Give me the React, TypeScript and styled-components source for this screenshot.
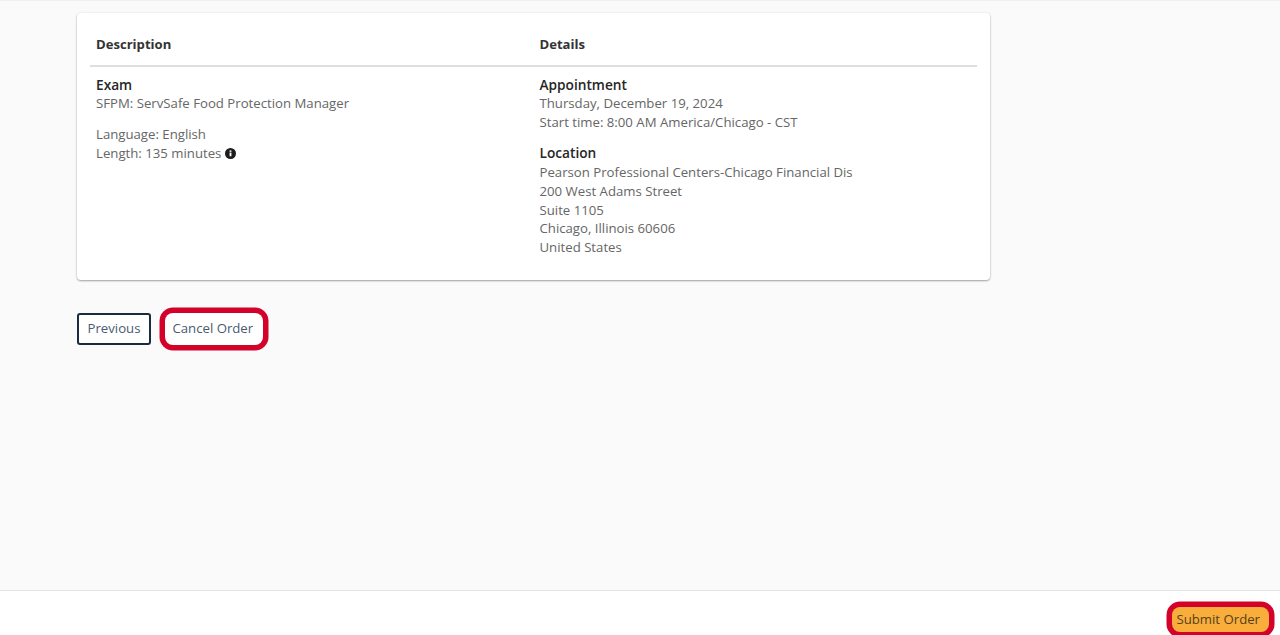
import React from "react";
import styled, { createGlobalStyle } from "styled-components";

const Global = createGlobalStyle`
  html, body { margin: 0; padding: 0; height: 100%; overflow: hidden; }
  body { font-family: "Open Sans", "Noto Sans", sans-serif; background: #fafafa; }
`;

const Page = styled.div`
  height: 635px;
  display: flex;
  flex-direction: column;
  border-top: 1px solid #f0f0f0;
  box-sizing: border-box;
`;

const Main = styled.main`
  flex: 1;
  padding: 12px 290px 0 77px;
`;

const Card = styled.section`
  height: 267px;
  box-sizing: border-box;
  background: #fff;
  border-radius: 4px;
  box-shadow: 0 1px 2px rgba(0, 0, 0, 0.35), 0 0 3px rgba(0, 0, 0, 0.06);
  padding: 0 13px;
`;

const Columns = styled.div`
  display: grid;
  grid-template-columns: 443.5px 1fr;
  padding-left: 6px;
`;

const HeadRow = styled(Columns)`
  height: 42px;
  align-items: center;
  padding-top: 10px;
  box-sizing: content-box;
  border-bottom: 2px solid #dedede;
`;

const HeadCell = styled.div`
  font-size: 13.1px;
  font-weight: 700;
  color: #333;
`;

const BodyRow = styled(Columns)`
  padding-top: 9px;
`;

const Block = styled.div`
  font-size: 13.2px;
  line-height: 18.7px;
  color: #666;
  margin-bottom: 12.5px;
`;

const Label = styled.div<{ $after?: number }>`
  font-size: 13.7px;
  font-weight: 600;
  color: #262626;
  margin-bottom: ${(p) => p.$after ?? -0.5}px;
`;

const InfoIcon = styled.svg`
  width: 11px;
  height: 11px;
  margin-left: 4px;
  vertical-align: -1px;
`;

const Actions = styled.div`
  display: flex;
  gap: 14.5px;
  margin-top: 33px;
`;

const Button = styled.button<{ $ring?: boolean; $primary?: boolean }>`
  font-family: inherit;
  font-size: 13.2px;
  color: ${(p) => (p.$primary ? "#54401c" : "#4a5a70")};
  height: ${(p) => (p.$primary ? "25px" : "32px")};
  padding: ${(p) =>
    p.$primary ? "0 9px 2px 4px" : p.$ring ? "0 10px 2px 7px" : "0 8.5px 2px"};
  border-radius: ${(p) => (p.$ring ? "8px" : "3px")};
  background: ${(p) => (p.$primary ? "#f9ae3b" : "#fff")};
  border: ${(p) => (p.$ring ? "none" : "2px solid #1a2b40")};
  box-shadow: ${(p) => (p.$ring ? "0 0 0 5.5px #d3022a" : "none")};
  white-space: nowrap;
`;

const Footer = styled.footer`
  height: 45px;
  box-sizing: border-box;
  background: #fff;
  border-top: 1px solid #e3e3e3;
  display: flex;
  justify-content: flex-end;
  align-items: flex-start;
  padding: 16px 11px 0 0;
`;

export default function App() {
  return (
    <>
      <Global />
      <Page>
        <Main>
          <Card>
            <HeadRow>
              <HeadCell>Description</HeadCell>
              <HeadCell>Details</HeadCell>
            </HeadRow>
            <BodyRow>
              <div>
                <Block>
                  <Label>Exam</Label>
                  SFPM: ServSafe Food Protection Manager
                </Block>
                <Block>
                  Language: English
                  <br />
                  Length: 135 minutes
                  <InfoIcon viewBox="0 0 12 12">
                    <circle cx="6" cy="6" r="6" fill="#1c1c1c" />
                    <rect x="5" y="5" width="2" height="4" fill="#fff" />
                    <rect x="5" y="2.6" width="2" height="1.6" fill="#fff" />
                  </InfoIcon>
                </Block>
              </div>
              <div>
                <Block>
                  <Label>Appointment</Label>
                  Thursday, December 19, 2024
                  <br />
                  Start time: 8:00 AM America/Chicago - CST
                </Block>
                <Block>
                  <Label $after={0.5}>Location</Label>
                  Pearson Professional Centers-Chicago Financial Dis
                  <br />
                  200 West Adams Street
                  <br />
                  Suite 1105
                  <br />
                  Chicago, Illinois 60606
                  <br />
                  United States
                </Block>
              </div>
            </BodyRow>
          </Card>
          <Actions>
            <Button>Previous</Button>
            <Button $ring>Cancel Order</Button>
          </Actions>
        </Main>
        <Footer>
          <Button $ring $primary>
            Submit Order
          </Button>
        </Footer>
      </Page>
    </>
  );
}
